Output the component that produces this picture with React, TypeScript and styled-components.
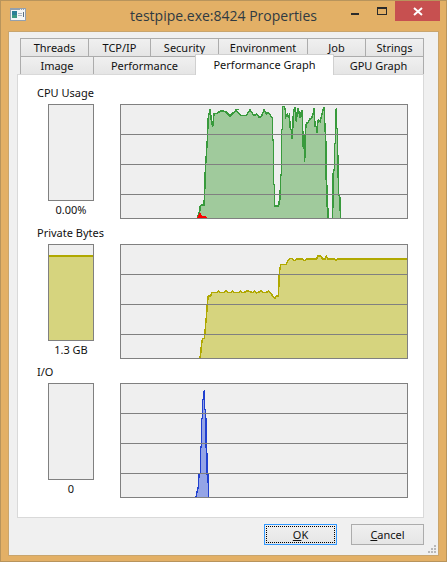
import React from "react";
import styled, { createGlobalStyle } from "styled-components";

const GlobalStyle = createGlobalStyle`
  html, body {
    margin: 0;
    padding: 0;
    background: #e3b066;
  }
`;

const Window = styled.div`
  position: relative;
  box-sizing: border-box;
  display: flex;
  flex-direction: column;
  width: 447px;
  height: 562px;
  background: #e3b066;
  border: 1px solid #b8945c;
  font-family: "Noto Sans", Tahoma, sans-serif;
  font-size: 11px;
  color: #111;
`;
const TitleBar = styled.div`
  position: relative;
  display: flex;
  align-items: center;
  justify-content: center;
  height: 30px;
  flex: none;
`;
const TitleIcon = styled.svg`
  position: absolute;
  top: 7px;
  left: 9px;
`;
const Title = styled.div`
  margin-top: -1px;
  font-family: "Open Sans", sans-serif;
  font-size: 14px;
  color: #2f3a42;
`;
const WindowButtons = styled.div`
  position: absolute;
  top: 0;
  right: 6px;
  display: flex;
  align-items: flex-start;
`;
const WindowButton = styled.div<{ $width: number; $close?: boolean }>`
  display: flex;
  align-items: center;
  justify-content: center;
  width: ${(p) => p.$width}px;
  height: 20px;
  background: ${(p) => (p.$close ? "#c75050" : "transparent")};
`;
const Client = styled.div`
  position: relative;
  box-sizing: border-box;
  display: flex;
  flex-direction: column;
  flex: none;
  width: 431px;
  height: 525px;
  margin-left: 7px;
  padding: 6px 13px 0 10px;
  background: #f0f0f0;
  border: 1px solid #c9a56d;
`;
const TabRow = styled.div<{ $height: number }>`
  display: flex;
  align-items: flex-start;
  height: ${(p) => p.$height}px;
  margin: 0 1px;
`;
const Tab = styled.div<{ $width: number; $active?: boolean }>`
  position: relative;
  box-sizing: border-box;
  display: flex;
  align-items: center;
  justify-content: center;
  flex: none;
  width: ${(p) => p.$width}px;
  height: ${(p) => (p.$active ? 21 : 19)}px;
  margin-top: ${(p) => (p.$active ? -2 : 0)}px;
  margin-left: -1px;
  padding-bottom: ${(p) => (p.$active ? 2 : 0)}px;
  border: 1px solid ${(p) => (p.$active ? "#d0d0d0" : "#acacac")};
  border-bottom: ${(p) => (p.$active ? "none" : "1px solid #acacac")};
  background: ${(p) =>
    p.$active ? "#ffffff" : "linear-gradient(#f0f0f0, #e5e5e5)"};
  z-index: ${(p) => (p.$active ? 2 : 0)};
  &:first-child {
    margin-left: 0;
  }
`;
const Panel = styled.div`
  position: relative;
  box-sizing: border-box;
  display: flex;
  flex-direction: column;
  flex: none;
  width: 407px;
  height: 444px;
  margin-left: -2px;
  margin-top: -1px;
  padding: 11px 17px 0 19px;
  background: #fff;
  border: 1px solid #d9d9d9;
  z-index: 1;
`;
const Section = styled.section<{ $height: number }>`
  display: flex;
  flex-direction: column;
  height: ${(p) => p.$height}px;
  flex: none;
`;
const Label = styled.div`
  height: 18px;
  line-height: 14px;
  flex: none;
`;
const SectionBody = styled.div`
  display: flex;
  align-items: flex-start;
`;
const GaugeColumn = styled.div`
  display: flex;
  flex-direction: column;
  align-items: center;
  flex: none;
  width: 46px;
  margin: 0 26px 0 11px;
`;
const Gauge = styled.div`
  box-sizing: border-box;
  display: flex;
  flex-direction: column;
  justify-content: flex-end;
  width: 46px;
  height: 97px;
  background: #efefef;
  border: 1px solid #808080;
`;
const GaugeFill = styled.div`
  box-sizing: border-box;
  background: #d6d47e;
  border-top: 2px solid #b0a800;
`;
const GaugeValue = styled.div`
  margin-top: 3px;
  line-height: 12px;
  white-space: nowrap;
`;
const GraphFrame = styled.svg`
  display: block;
  flex: none;
`;
const Footer = styled.div`
  display: flex;
  justify-content: flex-end;
  gap: 14px;
  width: 407px;
  margin: 6px 0 0 -2px;
`;
const DialogButton = styled.div<{ $default?: boolean }>`
  box-sizing: border-box;
  display: flex;
  align-items: center;
  justify-content: center;
  width: 73px;
  height: 21px;
  background: linear-gradient(#f0f0f0, #e5e5e5);
  border: ${(p) => (p.$default ? "1px solid #3399ff" : "1px solid #acacac")};
`;
const FocusRing = styled.span`
  box-sizing: border-box;
  display: flex;
  align-items: center;
  justify-content: center;
  width: 69px;
  height: 17px;
  border: 1px dotted #000;
`;
const Mnemonic = styled.span`
  text-decoration: underline;
`;
const SizeGrip = styled.svg`
  position: absolute;
  right: 1px;
  bottom: 1px;
`;

type Point = [number, number];

// points were read off a 3x crop, so map them back to page pixels
const crop = (ox: number, oy: number, pts: Point[]): Point[] =>
  pts.map(([x, y]) => [ox + x / 3, oy + y / 3] as Point);

const cpuRise = crop(190, 170, [
  [22, 145], [26, 130], [30, 120], [31, 106], [42, 105], [44, 65], [46, 0],
]);
const cpuMain = crop(20, 80, [
  [562, 180], [565, 110], [571, 88], [573, 115], [578, 140], [582, 100],
  [590, 100], [605, 92], [618, 96], [630, 108], [640, 98], [650, 90],
]);
const cpuTail = crop(230, 95, [
  [18, 45], [26, 56], [35, 62], [48, 62], [60, 45], [72, 62], [80, 57], [88, 67],
  [94, 65], [102, 45], [110, 57], [115, 53], [127, 68], [128, 135], [131, 135],
  [131, 268], [134, 268], [134, 333], [146, 333], [147, 322], [150, 312], [152, 240],
  [155, 240], [155, 103], [158, 103], [158, 35], [163, 35], [166, 45], [168, 65],
  [172, 58], [175, 65], [178, 60], [181, 100], [185, 105], [186, 133], [188, 105],
  [190, 60], [194, 35], [197, 60], [199, 80], [202, 50], [205, 38], [207, 55],
  [210, 65], [214, 50], [216, 45], [218, 100], [220, 160], [223, 160], [224, 200],
  [226, 112], [229, 85], [234, 83], [240, 72], [245, 68], [248, 62], [253, 38],
  [255, 95], [259, 95], [260, 115], [263, 85], [265, 75], [270, 80], [275, 60],
  [279, 45], [283, 35], [285, 110], [287, 110], [288, 253], [290, 253], [291, 335],
  [293, 335], [295, 370],
]);
const cpuPeak = crop(230, 95, [
  [307, 370], [309, 322], [310, 225], [313, 225], [314, 145], [316, 145], [317, 75],
  [319, 38], [320, 100], [322, 100], [324, 220], [326, 300], [329, 300], [331, 350],
  [332, 370],
]);
const kernel = crop(190, 170, [
  [24, 145], [27, 137], [30, 132], [33, 137], [38, 140], [48, 142], [48, 145],
]);

const bytesLine = crop(180, 240, [
  [60, 354], [62, 340], [65, 308], [68, 296], [73, 296], [75, 280], [77, 250], [80, 220],
  [82, 190], [85, 168], [92, 168], [96, 158], [110, 158], [115, 153], [120, 158],
  [132, 158], [138, 153], [144, 158], [152, 158], [158, 153], [164, 158], [176, 158],
  [181, 153], [187, 158], [196, 156], [202, 152], [212, 156], [218, 158], [223, 153],
  [230, 159], [238, 156], [243, 152], [250, 157], [258, 158], [265, 153], [272, 160],
  [278, 168], [284, 175], [290, 168], [295, 168], [296, 145], [298, 100], [302, 74],
  [318, 74], [325, 60], [332, 55], [338, 57], [343, 62], [350, 57], [368, 57], [373, 62],
  [380, 57], [410, 57], [413, 48], [422, 48], [428, 57], [435, 57], [439, 49], [444, 57],
  [462, 57], [468, 62], [473, 57], [680, 57],
]);

const ioLine = crop(20, 360, [
  [528, 415], [531, 395], [535, 380], [537, 342], [541, 340], [542, 262], [544, 260],
  [545, 175], [547, 175], [548, 120], [551, 118], [553, 90], [554, 148], [557, 148],
  [558, 262], [560, 262], [561, 342], [564, 342], [566, 415],
]);

const toPoints = (pts: Point[]) => pts.map(([x, y]) => `${x.toFixed(1)},${y.toFixed(1)}`).join(" ");

type Series = { points: Point[]; line: string; fill: string };

type GraphProps = {
  top: number;
  series: Series[];
};

// viewBox stays in page pixels so the traced points can be used as they are
const Graph = ({ top, series }: GraphProps) => {
  const bottom = top + 114;
  return (
    <GraphFrame
      width={288}
      height={115}
      viewBox={`120 ${top} 288 115`}
      shapeRendering="crispEdges"
    >
      <rect x={120} y={top} width={288} height={115} fill="#efefef" />
      {series.map((s, idx) => {
        const first = s.points[0];
        const last = s.points[s.points.length - 1];
        const area: Point[] = [...s.points, [last[0], bottom], [first[0], bottom]];
        return (
          <g key={idx}>
            <polygon points={toPoints(area)} fill={s.fill} />
            <polyline points={toPoints(s.points)} fill="none" stroke={s.line} strokeWidth={1.5} />
          </g>
        );
      })}
      {[30, 60, 90].map((dy) => (
        <rect key={dy} x={120} y={top + dy} width={288} height={1} fill="#808080" />
      ))}
      <rect x={120.5} y={top + 0.5} width={287} height={114} fill="none" stroke="#808080" />
    </GraphFrame>
  );
};

const topTabs = [
  { name: "Threads", width: 69 },
  { name: "TCP/IP", width: 63 },
  { name: "Security", width: 69 },
  { name: "Environment", width: 90 },
  { name: "Job", width: 59 },
  { name: "Strings", width: 59 },
];
const bottomTabs = [
  { name: "Image", width: 74 },
  { name: "Performance", width: 103 },
  { name: "Performance Graph", width: 139, active: true },
  { name: "GPU Graph", width: 91 },
];

const sections = [
  {
    label: "CPU Usage",
    value: "0.00%",
    top: 104,
    height: 140,
    series: [
      {
        points: [...cpuRise, ...cpuMain, ...cpuTail],
        line: "#389a3c",
        fill: "#a0ca9c",
      },
      { points: cpuPeak, line: "#389a3c", fill: "#a0ca9c" },
      { points: kernel, line: "#ff0000", fill: "#ff0000" },
    ],
  },
  {
    label: "Private Bytes",
    value: "1.3 GB",
    fill: 85,
    top: 244,
    height: 139,
    series: [{ points: bytesLine, line: "#b0a800", fill: "#d6d47e" }],
  },
  {
    label: "I/O",
    value: "0",
    top: 383,
    height: 139,
    series: [{ points: ioLine, line: "#2040d0", fill: "#94a4e6" }],
  },
];

const App = () => (
  <>
    <GlobalStyle />
    <Window>
      <TitleBar>
        <TitleIcon width={17} height={13} viewBox="0 0 17 13">
          <rect x={0} y={0} width={16} height={13} fill="#93a0ae" />
          <rect x={1} y={2} width={14} height={10} fill="#f4f6f8" />
          <rect x={2} y={3} width={5} height={7} fill="#2b7f96" />
          <rect x={2} y={7} width={5} height={3} fill="#3d9a84" />
          <rect x={8} y={5} width={4} height={1} fill="#aab4bf" />
          <rect x={8} y={7} width={4} height={1} fill="#aab4bf" />
          <rect x={13} y={4} width={1} height={5} fill="#5a6f80" />
          <rect x={10} y={1} width={1} height={1} fill="#e8ecef" />
          <rect x={12} y={1} width={1} height={1} fill="#e8ecef" />
          <rect x={14} y={1} width={1} height={1} fill="#e8ecef" />
        </TitleIcon>
        <Title>testpipe.exe:8424 Properties</Title>
        <WindowButtons>
          <WindowButton $width={24}>
            <svg width={10} height={20} viewBox="0 0 10 20">
              <rect x={0} y={12} width={8} height={2} fill="#2b2b2b" />
            </svg>
          </WindowButton>
          <WindowButton $width={27}>
            <svg width={11} height={20} viewBox="0 0 11 20">
              <rect x={1.5} y={6.5} width={9} height={7} fill="none" stroke="#2b2b2b" />
              <rect x={1} y={6} width={10} height={2} fill="#2b2b2b" />
            </svg>
          </WindowButton>
          <WindowButton $width={45} $close>
            <svg width={10} height={9} viewBox="0 0 10 9">
              <path d="M1 1 L9 8 M9 1 L1 8" stroke="#fff" strokeWidth={2} />
            </svg>
          </WindowButton>
        </WindowButtons>
      </TitleBar>
      <Client>
        <TabRow $height={18}>
          {topTabs.map((t) => (
            <Tab key={t.name} $width={t.width}>
              {t.name}
            </Tab>
          ))}
        </TabRow>
        <TabRow $height={19}>
          {bottomTabs.map((t) => (
            <Tab key={t.name} $width={t.width} $active={t.active}>
              {t.name}
            </Tab>
          ))}
        </TabRow>
        <Panel>
          {sections.map((s) => (
            <Section key={s.label} $height={s.height}>
              <Label>{s.label}</Label>
              <SectionBody>
                <GaugeColumn>
                  <Gauge>{s.fill ? <GaugeFill style={{ height: s.fill }} /> : null}</Gauge>
                  <GaugeValue>{s.value}</GaugeValue>
                </GaugeColumn>
                <Graph top={s.top} series={s.series} />
              </SectionBody>
            </Section>
          ))}
        </Panel>
        <Footer>
          <DialogButton $default>
            <FocusRing>
              <Mnemonic>O</Mnemonic>K
            </FocusRing>
          </DialogButton>
          <DialogButton>
            <span>
              <Mnemonic>C</Mnemonic>ancel
            </span>
          </DialogButton>
        </Footer>
        <SizeGrip width={10} height={10} viewBox="0 0 10 10">
          {[
            [7, 1],
            [4, 4],
            [7, 4],
            [1, 7],
            [4, 7],
            [7, 7],
          ].map(([x, y]) => (
            <rect key={`${x}-${y}`} x={x} y={y} width={2} height={2} fill="#b8b8b8" />
          ))}
        </SizeGrip>
      </Client>
    </Window>
  </>
);

export default App;
